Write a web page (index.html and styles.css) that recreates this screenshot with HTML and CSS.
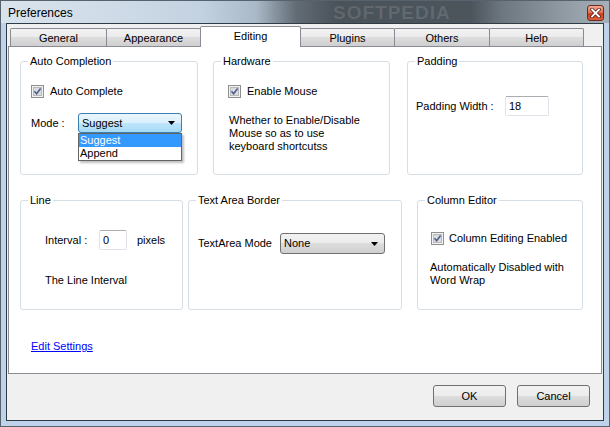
FILE: index.html
```html
<!DOCTYPE html>
<html lang="en">
<head>
    <meta charset="UTF-8">
    <title>Preferences</title>
    <link rel="stylesheet" href="styles.css">
</head>
<body>
    <div class="window">
        <div class="titlebar">
            <span class="title">Preferences</span>
            <span class="watermark">SOFTPEDIA</span>
            <span class="close">
                <svg width="11" height="10" viewBox="0 0 11 10">
                    <path d="M2 1.5 L9 8.5 M9 1.5 L2 8.5" stroke="#5a2016" stroke-width="3.4" stroke-linecap="square"/>
                    <path d="M2 1.5 L9 8.5 M9 1.5 L2 8.5" stroke="#fff" stroke-width="1.8" stroke-linecap="square"/>
                </svg>
            </span>
        </div>

        <div class="client">
            <div class="tabs">
                <div class="tab tab-general">General</div>
                <div class="tab tab-appearance">Appearance</div>
                <div class="tab tab-editing active">Editing</div>
                <div class="tab tab-plugins">Plugins</div>
                <div class="tab tab-others">Others</div>
                <div class="tab tab-help">Help</div>
            </div>

            <div class="panel">
                <div class="row row-top">
                    <fieldset class="group g-auto">
                        <legend>Auto Completion</legend>
                        <div class="body">
                            <div class="check-row">
                                <svg class="check" width="13" height="13" viewBox="0 0 13 13">
                                    <rect x="0.5" y="0.5" width="12" height="12" fill="#f3f3f3" stroke="#8e8f8f"/>
                                    <rect x="2.5" y="2.5" width="8" height="8" fill="#dcdcdc" stroke="#b9b9b9"/>
                                    <path d="M3.5 6.3 L5.6 8.8 L9.6 3.4" fill="none" stroke="#4b5f93" stroke-width="1.6"/>
                                </svg>
                                <span>Auto Complete</span>
                            </div>
                            <div class="field-row mode-row">
                                <span class="label">Mode :</span>
                                <div class="combo combo-open">
                                    <span>Suggest</span>
                                    <svg width="7" height="4" viewBox="0 0 7 4"><path d="M0 0 H7 L3.5 4 Z" fill="#000"/></svg>
                                    <ul class="dropdown">
                                        <li class="selected">Suggest</li>
                                        <li>Append</li>
                                    </ul>
                                </div>
                            </div>
                        </div>
                    </fieldset>

                    <fieldset class="group g-hardware">
                        <legend>Hardware</legend>
                        <div class="body">
                            <div class="check-row">
                                <svg class="check" width="13" height="13" viewBox="0 0 13 13">
                                    <rect x="0.5" y="0.5" width="12" height="12" fill="#f3f3f3" stroke="#8e8f8f"/>
                                    <rect x="2.5" y="2.5" width="8" height="8" fill="#dcdcdc" stroke="#b9b9b9"/>
                                    <path d="M3.5 6.3 L5.6 8.8 L9.6 3.4" fill="none" stroke="#4b5f93" stroke-width="1.6"/>
                                </svg>
                                <span>Enable Mouse</span>
                            </div>
                            <p class="note">Whether to Enable/Disable<br>Mouse so as to use<br>keyboard shortcutss</p>
                        </div>
                    </fieldset>

                    <fieldset class="group g-padding">
                        <legend>Padding</legend>
                        <div class="body">
                            <div class="field-row">
                                <span class="label">Padding Width :</span>
                                <span class="textbox tb-padding">18</span>
                            </div>
                        </div>
                    </fieldset>
                </div>

                <div class="row row-bottom">
                    <fieldset class="group g-line">
                        <legend>Line</legend>
                        <div class="body">
                            <div class="field-row">
                                <span class="label">Interval :</span>
                                <span class="textbox tb-interval">0</span>
                                <span class="unit">pixels</span>
                            </div>
                            <p class="note">The Line Interval</p>
                        </div>
                    </fieldset>

                    <fieldset class="group g-border">
                        <legend>Text Area Border</legend>
                        <div class="body">
                            <div class="field-row">
                                <span class="label">TextArea Mode</span>
                                <div class="combo combo-plain">
                                    <span>None</span>
                                    <svg width="7" height="4" viewBox="0 0 7 4"><path d="M0 0 H7 L3.5 4 Z" fill="#000"/></svg>
                                </div>
                            </div>
                        </div>
                    </fieldset>

                    <fieldset class="group g-column">
                        <legend>Column Editor</legend>
                        <div class="body">
                            <div class="check-row">
                                <svg class="check" width="13" height="13" viewBox="0 0 13 13">
                                    <rect x="0.5" y="0.5" width="12" height="12" fill="#f3f3f3" stroke="#8e8f8f"/>
                                    <rect x="2.5" y="2.5" width="8" height="8" fill="#dcdcdc" stroke="#b9b9b9"/>
                                    <path d="M3.5 6.3 L5.6 8.8 L9.6 3.4" fill="none" stroke="#4b5f93" stroke-width="1.6"/>
                                </svg>
                                <span>Column Editing Enabled</span>
                            </div>
                            <p class="note">Automatically Disabled with<br>Word Wrap</p>
                        </div>
                    </fieldset>
                </div>

                <a class="edit-link" href="#">Edit Settings</a>
            </div>

            <div class="buttons">
                <button type="button">OK</button>
                <button type="button">Cancel</button>
            </div>
        </div>
    </div>
</body>
</html>
```

FILE: styles.css
```css
body {
    margin: 0;
    font-family: "Liberation Sans", Arial, sans-serif;
    font-size: 11px;
    line-height: 13px;
    color: #000;
}

.window {
    width: 610px;
    height: 427px;
    box-sizing: border-box;
    border: 1px solid #56636f;
    background-color: #bed3e9;
    display: flex;
    flex-direction: column;
}

/* title bar */

.titlebar {
    flex: none;
    height: 22px;
    display: flex;
    align-items: flex-start;
    justify-content: space-between;
    padding: 0 5px 0 7px;
    position: relative;
    overflow: hidden;
    background: linear-gradient(to right, #d8e3ec 0, #d0dce8 100px, #c3d2e1 200px, #aab9c7 255px, #626c75 295px, #4a525a 335px, #4c545c 470px, #6c767e 500px, #8e99a2 560px, #a6b1ba 610px);
}

.title {
    font-size: 12px;
    line-height: 15px;
    margin-top: 5px;
}

.watermark {
    position: absolute;
    left: 332px;
    top: 1px;
    font-size: 19px;
    line-height: 21px;
    font-weight: bold;
    letter-spacing: 1px;
    color: rgba(255, 255, 255, 0.13);
}

.close {
    width: 17px;
    height: 16px;
    margin-top: 4px;
    box-sizing: border-box;
    border: 1px solid #6e2b20;
    border-radius: 3px;
    background: linear-gradient(#f0a894 0, #e2775c 45%, #c9401f 55%, #d9603f 100%);
    display: flex;
    align-items: center;
    justify-content: center;
}

/* client area */

.client {
    flex: none;
    height: 398px;
    box-sizing: border-box;
    margin: 0 5px;
    border: 1px solid #2f3b47;
    background-color: #f0f0f0;
    display: flex;
    flex-direction: column;
}

.tabs {
    height: 22px;
    display: flex;
    align-items: flex-end;
    padding-left: 3px;
}

.tab {
    position: relative;
    height: 18px;
    box-sizing: border-box;
    border: 1px solid #898c95;
    border-bottom: none;
    border-radius: 2px 2px 0 0;
    background: linear-gradient(#f2f2f2 0, #ebebeb 50%, #dddddd 50%, #cfcfcf 100%);
    text-align: center;
    line-height: 18px;
    margin-left: -1px;
}

.tab-general { width: 97px; margin-left: 0; }
.tab-appearance { width: 95px; }
.tab-editing { width: 101px; }
.tab-plugins { width: 95px; }
.tab-others { width: 96px; }
.tab-help { width: 95px; }

.tab.active {
    height: 21px;
    margin-bottom: -1px;
    background: #fff;
    z-index: 1;
    line-height: 19px;
}

.panel {
    height: 328px;
    box-sizing: border-box;
    margin: 0 1px;
    border: 1px solid #898c95;
    background-color: #fff;
    padding: 8px 0 0 11px;
}

.row {
    display: flex;
}

.row-bottom {
    margin-top: 19px;
}

/* group boxes */

.group {
    margin: 0;
    padding: 0;
    min-width: 0;
    box-sizing: border-box;
    border: 1px solid #d5dfe5;
    border-radius: 3px;
}

.group legend {
    padding: 0 2px;
    margin-left: 7px;
    line-height: 13px;
}

.row-top .group { height: 120px; }
.row-bottom .group { height: 116px; }

.g-auto { width: 178px; }
.g-hardware { width: 177px; margin-left: 15px; }
.g-padding { width: 176px; margin-left: 17px; }
.g-line { width: 163px; }
.g-border { width: 214px; margin-left: 5px; }
.g-column { width: 166px; margin-left: 15px; }

.g-auto .body { padding: 17px 0 0 10px; }
.g-hardware .body { padding: 17px 0 0 14px; }
.g-padding .body { padding: 28px 0 0 8px; }
.g-line .body { padding: 23px 0 0 24px; }
.g-border .body { padding: 26px 0 0 9px; }
.g-column .body { padding: 25px 0 0 13px; }

.check-row {
    display: flex;
    align-items: center;
    height: 13px;
}

.check {
    flex: none;
    margin-right: 6px;
}

.g-column .check {
    margin-right: 5px;
}

.note {
    margin: 0;
}

.g-hardware .note { margin: 16px 0 0 1px; }
.g-line .note { margin-top: 24px; }
.g-column .note { margin: 16px 0 0 -1px; }

.field-row {
    display: flex;
    align-items: center;
}

.mode-row {
    margin-top: 15px;
}

.mode-row .label { width: 47px; }
.g-padding .label { width: 89px; }
.g-line .label { width: 54px; }
.g-border .label { width: 82px; }

.unit {
    margin-left: 10px;
}

.textbox {
    box-sizing: border-box;
    height: 20px;
    line-height: 18px;
    padding-left: 3px;
    border: 1px solid #e2e3ea;
    border-top-color: #abadb3;
    border-radius: 2px;
    background: #fff;
}

.tb-padding { width: 44px; }
.tb-interval { width: 28px; }

/* combo boxes */

.combo {
    position: relative;
    box-sizing: border-box;
    width: 104px;
    height: 20px;
    border-radius: 3px;
    display: flex;
    align-items: center;
    justify-content: space-between;
    padding: 0 6px 0 3px;
}

.combo-open {
    border: 1px solid #3c7fb1;
    background: linear-gradient(#eaf6fd 0, #d9f0fc 50%, #bee6fd 50%, #a7d9f5 100%);
}

.combo-plain {
    width: 105px;
    height: 21px;
    border: 1px solid #707070;
    background: linear-gradient(#f2f2f2 0, #ebebeb 50%, #dddddd 50%, #cfcfcf 100%);
}

.dropdown {
    position: absolute;
    top: 19px;
    left: -1px;
    width: 104px;
    box-sizing: border-box;
    margin: 0;
    padding: 0;
    list-style: none;
    border: 1px solid #646464;
    background: #fff;
    box-shadow: 2px 2px 2px rgba(0, 0, 0, 0.25);
}

.dropdown li {
    height: 13px;
    padding-left: 1px;
}

.dropdown li.selected {
    background-color: #3399ff;
    color: #fff;
}

.edit-link {
    display: inline-block;
    margin: 30px 0 0 11px;
    color: #0000ff;
    text-decoration: underline;
}

/* dialog buttons */

.buttons {
    display: flex;
    justify-content: flex-end;
    gap: 11px;
    padding: 11px 13px 0 0;
}

.buttons button {
    width: 73px;
    height: 22px;
    border: 1px solid #707070;
    border-radius: 3px;
    background: linear-gradient(#f2f2f2 0, #ebebeb 50%, #dddddd 50%, #cfcfcf 100%);
    font-family: "Liberation Sans", Arial, sans-serif;
    font-size: 11px;
    color: #000;
    padding: 0;
}
```
